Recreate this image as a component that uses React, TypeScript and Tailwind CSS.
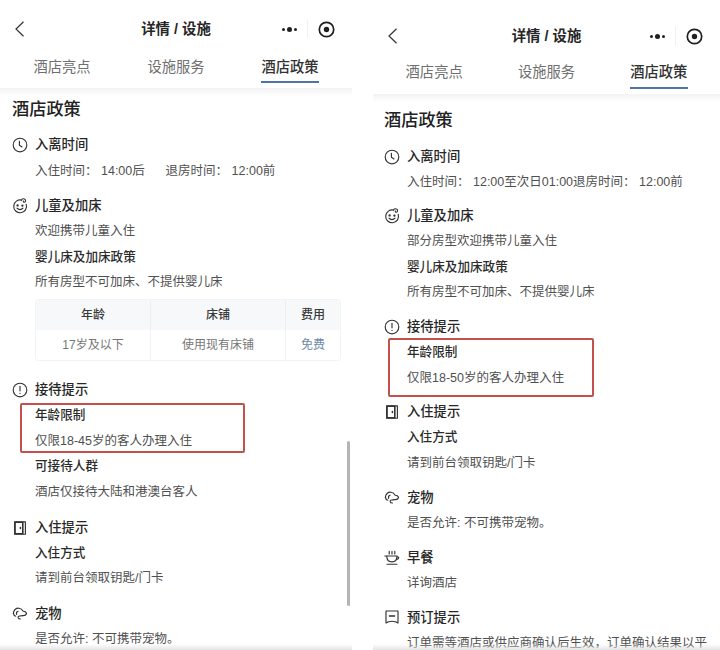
import React from "react";

const stroke = { fill: "none", stroke: "#333333", strokeWidth: 1.15, strokeLinecap: "round" as const, strokeLinejoin: "round" as const };

const Clock = () => (
  <svg width="16" height="16" viewBox="0 0 16 16" {...stroke}>
    <circle cx="8" cy="8" r="6.8" />
    <path d="M7.4 4.200V8.200L10 10" />
  </svg>
);
const Smile = () => (
  <svg width="16" height="16" viewBox="0 0 16 16" {...stroke}>
    <path d="M9.800 2.200A6.400 6.400 0 1 0 14.200 6.400" />
    <path d="M9.400 2c.6-1.400 2.600-1.600 3.600-.6 1 1 .6 2.600-.6 2.800-.8.100-1.300-.6-1-1.200" />
    <circle cx="5.600" cy="7.400" r=".6" />
    <circle cx="10.400" cy="7.600" r=".6" />
    <path d="M5 10.200c1.600 1.800 4.400 1.800 6 0" />
  </svg>
);
const Alert = () => (
  <svg width="16" height="16" viewBox="0 0 16 16" {...stroke}>
    <circle cx="8" cy="8" r="6.800" />
    <path d="M8 4.400V8.800" />
    <path d="M8 11.200V11.400" />
  </svg>
);
const Door = () => (
  <svg width="16" height="16" viewBox="0 0 16 16" {...stroke}>
    <path d="M2.600 1.800H13.400V14.200H2.600Z" />
    <path d="M3 2.200H10.800V13.800H3Z" strokeWidth="1.600" />
    <path d="M8.400 7.400V8.400" strokeWidth="1.500" />
  </svg>
);
const Pet = () => (
  <svg width="16" height="16" viewBox="0 0 16 16" {...stroke}>
    <path d="M1.400 7.400C1.400 4.200 4 2 6.800 2.200c2.200.200 3.600 1.400 4.400 3 1.400 0 2.800.600 3.400 2-.400 1.800-2.200 2.600-4 2.400-1 .200-2 .400-3 .400-.800 0-1.600.600-1.400 1.800.200.800 1 1.200 2.200 1.200" />
    <path d="M1.400 7.400c.200 1.400 1 2.600 2.400 2.800" />
    <path d="M6 5.200C4.800 5.600 4.200 7 4.600 8.400" />
  </svg>
);
const Cup = () => (
  <svg width="16" height="16" viewBox="0 0 16 16" {...stroke}>
    <path d="M5.200 1.400V4M8 1.400V4M10.800 1.400V4" />
    <path d="M.8 6H13" />
    <path d="M2.800 6.200C2.800 10 4.600 11.800 8 11.800s5-1.800 5-5.600" />
    <path d="M13 7h1.200c.8 0 .8 2-1.600 2.400" />
    <path d="M3 14.200H13" />
  </svg>
);
const Note = () => (
  <svg width="16" height="16" viewBox="0 0 16 16" {...stroke}>
    <path d="M2 2H14V14C12.600 12.800 10.800 12.200 8 12.200S3.400 12.800 2 14Z" />
    <path d="M5.400 7H10.600" strokeWidth="1.400" />
  </svg>
);

const Head = ({ icon, children }: { icon: React.ReactNode; children: React.ReactNode }) => (
  <div className="flex h-[25.6px] items-center">
    <span className="flex w-[23px] shrink-0 items-center">{icon}</span>
    <span className="text-[13.3px] font-medium text-[#262626]">{children}</span>
  </div>
);
const Sub = ({ children }: { children: React.ReactNode }) => (
  <div className="flex h-[25.6px] items-center pl-[23px] text-[12.6px] font-medium text-[#2b2b2b]">{children}</div>
);
const Body = ({ children }: { children: React.ReactNode }) => (
  <div className="flex h-[25.6px] items-center whitespace-pre pl-[23px] text-[12.5px] text-[#505050]">{children}</div>
);

const Red = ({ className }: { className: string }) => (
  <div className={`absolute rounded-[2px] border-2 border-[#c4504c] ${className}`} />
);

const Top = ({ wrap, tabRow, tabText }: { wrap: string; tabRow: string; tabText: string }) => (
  <div className={wrap}>
    <div className="relative flex h-[44px] items-center justify-center">
      <svg className="absolute left-[14px] top-[14px]" width="11" height="16" viewBox="0 0 11 16" fill="none" stroke="#333333" strokeWidth="1.200">
        <path d="M9.500 .8L2 8L9.500 15.200" />
      </svg>
      <span className="whitespace-pre pt-[2px] text-[14.400px] font-bold text-[#262626]">详情 / 设施</span>
      <div className="absolute right-[7px] top-[8px] flex h-[28px] w-[88px] items-center">
        <div className="flex w-[50px] items-center justify-center gap-[2px] pl-[14px]">
          <span className="h-[3px] w-[3px] rounded-full bg-[#1f1f1f]" />
          <span className="h-[5px] w-[5px] rounded-full bg-[#1f1f1f]" />
          <span className="h-[3px] w-[3px] rounded-full bg-[#1f1f1f]" />
        </div>
        <div className="h-[18px] w-px bg-[#f0f0f0]" />
        <div className="flex flex-1 items-center justify-center">
          <svg width="17" height="17" viewBox="0 0 17 17">
            <circle cx="8.500" cy="8.500" r="7.200" fill="none" stroke="#1f1f1f" strokeWidth="1.700" />
            <circle cx="8.500" cy="8.500" r="2.700" fill="#1f1f1f" />
          </svg>
        </div>
      </div>
    </div>
    <div className={`grid grid-cols-3 px-[5px] ${tabRow}`}>
      {["酒店亮点", "设施服务"].map((t) => (
        <div key={t} className={`flex items-center justify-center text-[14.300px] text-[#6f6f6f] ${tabText}`}>{t}</div>
      ))}
      <div className="flex flex-col items-center">
        <div className={`flex items-center text-[14.300px] font-medium text-[#333333] ${tabText}`}>
          <span>酒店政策</span>
        </div>
        <div className="h-[2px] w-[58px] bg-[#4f74a8]" />
      </div>
    </div>
  </div>
);

const BottomFade = () => (
  <div className="absolute bottom-0 left-0 right-0 h-[6px] bg-gradient-to-b from-[#ffffff00] to-[#e4e4e4]" />
);
const TopFade = () => <div className="h-[8px] bg-gradient-to-b from-[#f3f3f3] to-[#ffffff]" />;

export default function App() {
  return (
    <div className="flex h-[650px] w-[720px] overflow-hidden bg-white font-['Liberation_Sans','Noto_Sans_CJK_SC',sans-serif]">
      <div className="relative h-[650px] w-[352px] shrink-0 overflow-hidden">
        <Top wrap="pt-[7px] pb-[5px]" tabRow="h-[32px]" tabText="h-[30px] pt-[4px]" />
        <TopFade />
        <div className="px-[12px] pt-[1px]">
          <h1 className="flex h-[24px] items-center pt-[2px] text-[17.200px] font-medium text-[#222222]">酒店政策</h1>
          <div className="mt-[11.500px]">
            <Head icon={<Clock />}>入离时间</Head>
            <Body>{"入住时间： 14:00后      退房时间： 12:00前"}</Body>
          </div>
          <div className="mt-[9.500px]">
            <Head icon={<Smile />}>儿童及加床</Head>
            <Body>欢迎携带儿童入住</Body>
            <Sub>婴儿床及加床政策</Sub>
            <Body>所有房型不可加床、不提供婴儿床</Body>
          </div>
          <div className="ml-[23px] mt-[3.500px] h-[61.500px] w-[306px] overflow-hidden rounded-[3px] border border-[#f1f2f4] text-[12px]">
            <div className="grid h-[30px] grid-cols-[115px_135px_1fr] bg-[#f6f8fa] font-medium text-[#3a3a3a]">
              <div className="flex items-center justify-center border-r border-[#eceef0]">年龄</div>
              <div className="flex items-center justify-center border-r border-[#eceef0]">床铺</div>
              <div className="flex items-center justify-center">费用</div>
            </div>
            <div className="grid h-[30px] grid-cols-[115px_135px_1fr] text-[#777777]">
              <div className="flex items-center justify-center border-r border-[#f1f2f4]">17岁及以下</div>
              <div className="flex items-center justify-center border-r border-[#f1f2f4]">使用现有床铺</div>
              <div className="flex items-center justify-center text-[#6d8aa8]">免费</div>
            </div>
          </div>
          <div className="mt-[16.500px]">
            <Head icon={<Alert />}>接待提示</Head>
            <div className="relative">
              <Sub>年龄限制</Sub>
              <Body>仅限18-45岁的客人办理入住</Body>
              <Red className="left-[8px] top-0 bottom-[1px] w-[225px]" />
            </div>
            <Sub>可接待人群</Sub>
            <Body>酒店仅接待大陆和港澳台客人</Body>
          </div>
          <div className="mt-[9.700px]">
            <Head icon={<Door />}>入住提示</Head>
            <Sub>入住方式</Sub>
            <Body>请到前台领取钥匙/门卡</Body>
          </div>
          <div className="mt-[9.500px]">
            <Head icon={<Pet />}>宠物</Head>
            <Body>是否允许: 不可携带宠物。</Body>
          </div>
        </div>
        <div className="absolute right-[2px] top-[441px] h-[165px] w-[3px] rounded-full bg-[#b4b4b4]" />
        <BottomFade />
      </div>
      <div className="w-[21px] shrink-0" />
      <div className="relative h-[650px] w-[347px] shrink-0 overflow-hidden">
        <Top wrap="pt-[14px] pb-[5px]" tabRow="h-[31px]" tabText="h-[29px]" />
        <TopFade />
        <div className="px-[11px] pt-[6px]">
          <h1 className="flex h-[24px] items-center pt-[2px] text-[17.200px] font-medium text-[#222222]">酒店政策</h1>
          <div className="mt-[12px]">
            <Head icon={<Clock />}>入离时间</Head>
            <Body>{"入住时间： 12:00至次日01:00退房时间： 12:00前"}</Body>
          </div>
          <div className="mt-[8px]">
            <Head icon={<Smile />}>儿童及加床</Head>
            <Body>部分房型欢迎携带儿童入住</Body>
            <Sub>婴儿床及加床政策</Sub>
            <Body>所有房型不可加床、不提供婴儿床</Body>
          </div>
          <div className="mt-[8.800px]">
            <Head icon={<Alert />}>接待提示</Head>
            <div className="relative">
              <Sub>年龄限制</Sub>
              <Body>仅限18-50岁的客人办理入住</Body>
              <Red className="left-[4px] -top-[2px] -bottom-[6px] w-[206px]" />
            </div>
          </div>
          <div className="mt-[8.300px]">
            <Head icon={<Door />}>入住提示</Head>
            <Sub>入住方式</Sub>
            <Body>请到前台领取钥匙/门卡</Body>
          </div>
          <div className="mt-[8.800px]">
            <Head icon={<Pet />}>宠物</Head>
            <Body>是否允许: 不可携带宠物。</Body>
          </div>
          <div className="mt-[8.500px]">
            <Head icon={<Cup />}>早餐</Head>
            <Body>详询酒店</Body>
          </div>
          <div className="mt-[8.800px]">
            <Head icon={<Note />}>预订提示</Head>
            <Body>订单需等酒店或供应商确认后生效，订单确认结果以平</Body>
          </div>
        </div>
        <BottomFade />
      </div>
    </div>
  );
}
